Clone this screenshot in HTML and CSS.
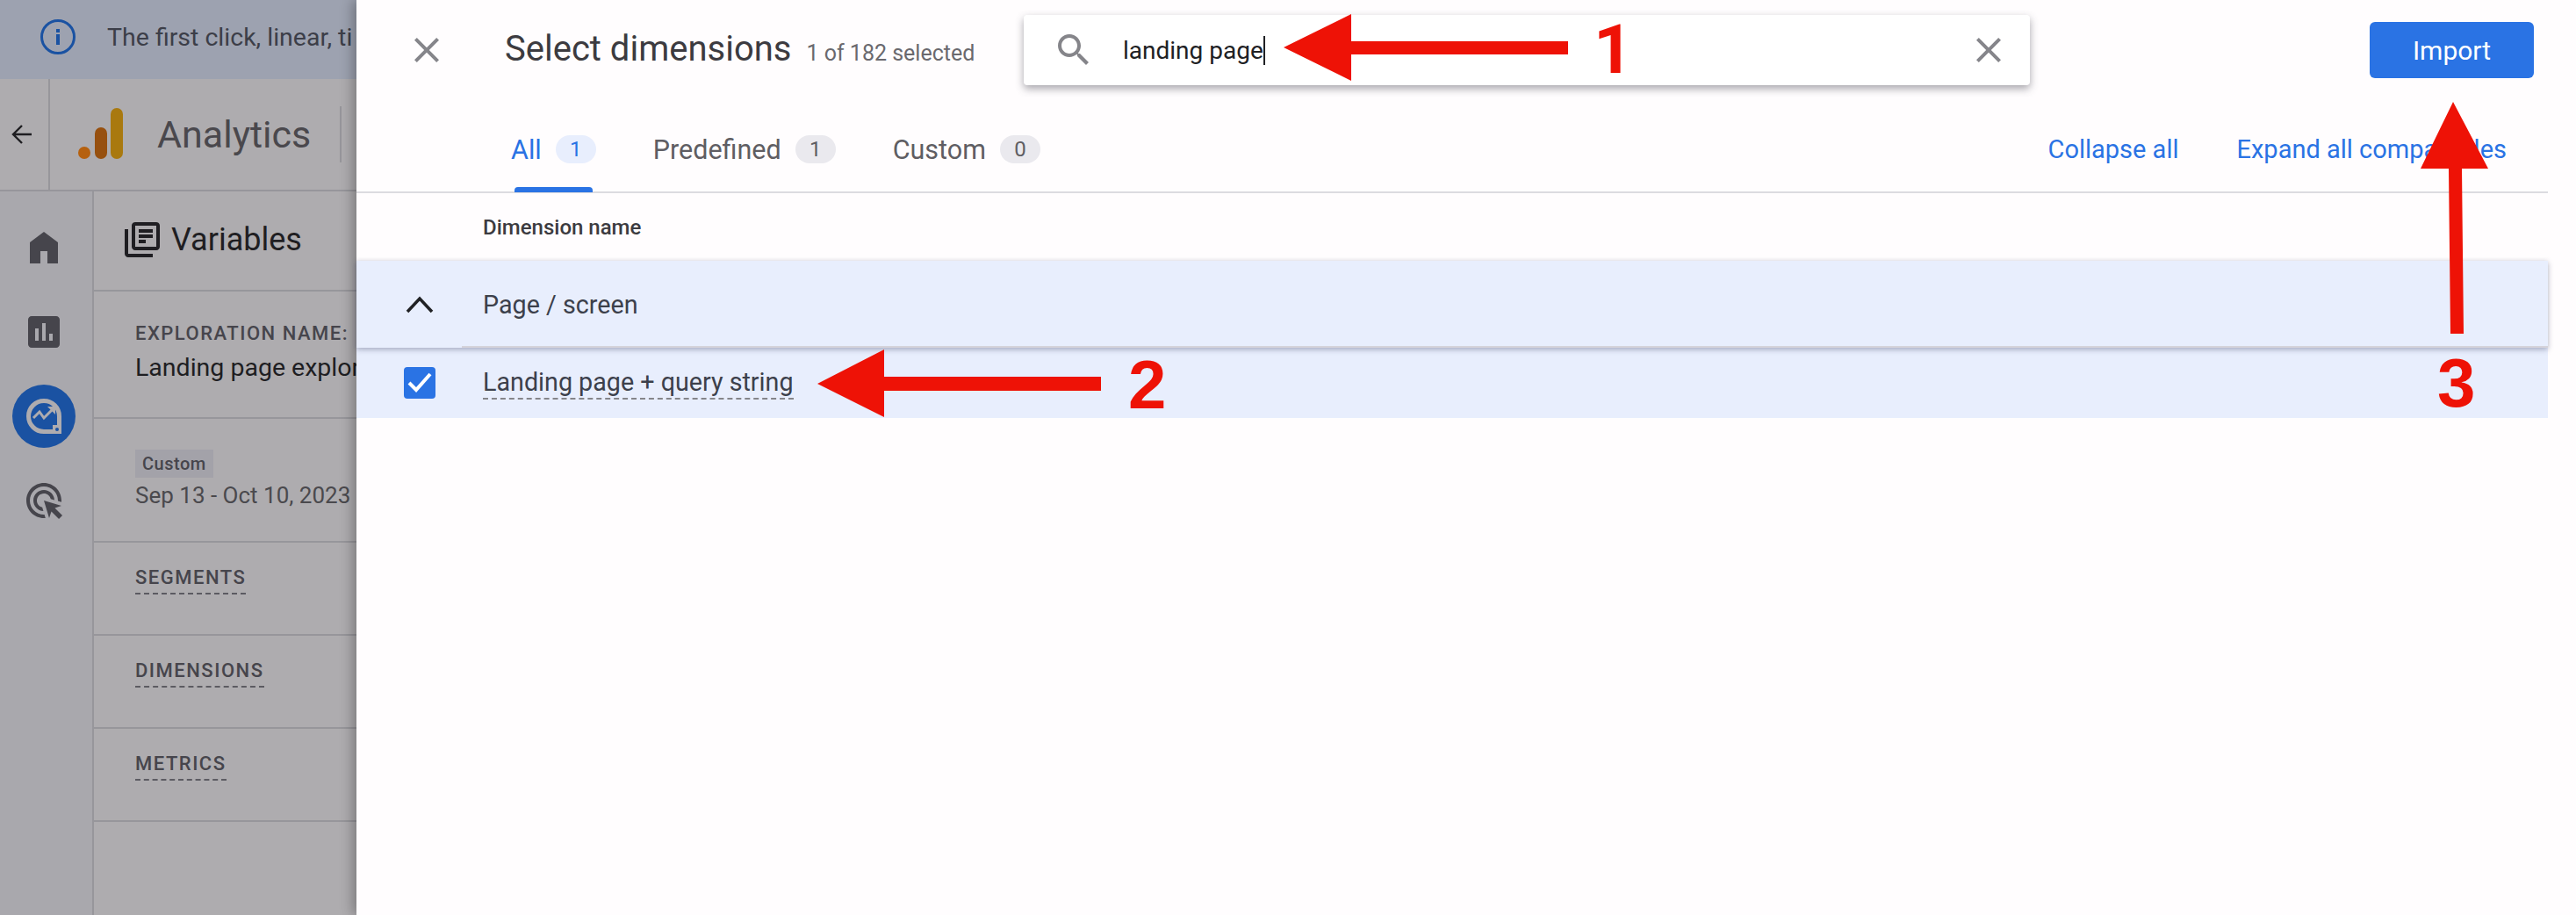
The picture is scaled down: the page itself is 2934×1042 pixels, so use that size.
FILE: index.html
```html
<!DOCTYPE html>
<html>
  <head>
    <title>Select dimensions</title>
    <link rel="stylesheet" href="styles.css">
  </head>
  <body>
    <div class="page">
      <!-- Dimmed app behind the panel -->
      <div class="backdrop">
        <div class="banner">
          <svg class="info-icon" viewBox="0 0 40 40">
            <circle cx="20" cy="20" r="18.5" fill="none" stroke="#1a52a2" stroke-width="3"/>
            <rect x="18" y="17" width="4" height="12" fill="#1a52a2"/>
            <rect x="18" y="11" width="4" height="4" fill="#1a52a2"/>
          </svg>
          <span class="banner-text">The first click, linear, ti</span>
        </div>
        <div class="app-header">
          <div class="back-cell">
            <svg class="back-icon" viewBox="0 0 24 24">
              <path d="M23 12H3M12 2L2 12l10 10" fill="none" stroke="#1f1e22" stroke-width="2.4"/>
            </svg>
          </div>
          <svg class="logo" viewBox="0 0 52 60">
            <circle cx="7" cy="51" r="7" fill="#b6610f"/>
            <rect x="19" y="22" width="14" height="36" rx="7" fill="#97500f"/>
            <rect x="37" y="0" width="14" height="58" rx="7" fill="#a9790f"/>
          </svg>
          <span class="app-name">Analytics</span>
          <span class="header-rule"></span>
        </div>
        <div class="app-body">
          <div class="sidebar">
            <div class="nav-item">
              <svg class="nav-icon" viewBox="0 0 24 24"><path d="M4 21V9l8-6 8 6v12h-6v-7h-4v7z"/></svg>
            </div>
            <div class="nav-item">
              <svg class="nav-icon" viewBox="0 0 24 24"><path d="M19 3H5c-1.1 0-2 .9-2 2v14c0 1.1.9 2 2 2h14c1.1 0 2-.9 2-2V5c0-1.1-.9-2-2-2zM9 17H7v-7h2v7zm4 0h-2V7h2v10zm4 0h-2v-4h2v4z"/></svg>
            </div>
            <div class="nav-item">
              <div class="nav-active">
                <svg class="explore-icon" viewBox="0 0 40 40">
                  <path d="M20 2.500a17.500 17.500 0 0 1 17.500 17.500V37.500H20a17.500 17.500 0 0 1 0-35z" fill="none" stroke="#aeacaf" stroke-width="5"/>
                  <path d="M30 30h8v8h-8z" fill="#aeacaf"/>
                  <circle cx="35" cy="35" r="2" fill="#1a52a2"/>
                  <path d="M8 22l7-7 5 7 9-9" fill="none" stroke="#aeacaf" stroke-width="3"/>
                  <path d="M24 9h9v9z" fill="#aeacaf"/>
                </svg>
              </div>
            </div>
            <div class="nav-item">
              <svg class="nav-icon" viewBox="0 0 24 24"><path d="M11.710 17.990C8.530 17.840 6 15.220 6 12c0-3.310 2.690-6 6-6 3.220 0 5.840 2.530 5.990 5.710l-2.100-.63C15.480 9.310 13.890 8 12 8c-2.210 0-4 1.790-4 4 0 1.890 1.310 3.480 3.080 3.890l.63 2.100zM22 12c0 .3-.01.6-.04.9l-1.970-.59c.01-.1.01-.21.01-.31 0-4.420-3.580-8-8-8s-8 3.580-8 8 3.580 8 8 8c.1 0 .21 0 .31-.01l.59 1.970c-.3.03-.6.04-.9.04-5.520 0-10-4.480-10-10S6.480 2 12 2s10 4.480 10 10zm-3.770 4.260L22 15l-10-3 3 10 1.260-3.770 4.270 4.270 1.980-1.980-4.280-4.260z"/></svg>
            </div>
          </div>
          <div class="variables">
            <div class="variables-head">
              <svg class="variables-icon" viewBox="0 0 24 24"><path d="M4 6H2v14c0 1.100.9 2 2 2h14v-2H4V6zm16-4H8c-1.100 0-2 .9-2 2v12c0 1.100.9 2 2 2h12c1.100 0 2-.9 2-2V4c0-1.100-.9-2-2-2zm0 14H8V4h12v12zM10 9h8v2h-8zm0 3h4v2h-4zm0-6h8v2h-8z"/></svg>
              <span class="variables-title">Variables</span>
            </div>
            <div class="var-section name-section">
              <div class="var-label">EXPLORATION NAME:</div>
              <div class="var-name">Landing page explor</div>
            </div>
            <div class="var-section date-section">
              <span class="date-tag">Custom</span>
              <div class="date-range">Sep 13 - Oct 10, 2023</div>
            </div>
            <div class="var-section label-section"><span class="var-label dashed">SEGMENTS</span></div>
            <div class="var-section label-section"><span class="var-label dashed">DIMENSIONS</span></div>
            <div class="var-section label-section"><span class="var-label dashed">METRICS</span></div>
          </div>
        </div>
      </div>

      <!-- Select dimensions panel -->
      <div class="panel">
        <div class="top-bar">
          <svg class="close-icon" viewBox="0 0 24 24"><path d="M19 6.410 17.590 5 12 10.590 6.410 5 5 6.410 10.590 12 5 17.590 6.410 19 12 13.410 17.590 19 19 17.590 13.410 12z"/></svg>
          <div class="title-block">
            <span class="title">Select dimensions</span>
            <span class="title-count">1 of 182 selected</span>
          </div>
          <div class="search">
            <svg class="search-icon" viewBox="0 0 24 24"><path d="M15.500 14h-.79l-.28-.27C15.410 12.590 16 11.110 16 9.500 16 5.910 13.090 3 9.500 3S3 5.910 3 9.500 5.910 16 9.500 16c1.610 0 3.090-.59 4.230-1.570l.27.28v.79l5 4.990L20.490 19l-4.990-5zm-6 0C7.010 14 5 11.990 5 9.500S7.010 5 9.500 5 14 7.010 14 9.500 11.990 14 9.500 14z"/></svg>
            <span class="search-text">landing page</span>
            <span class="caret"></span>
            <svg class="clear-icon" viewBox="0 0 24 24"><path d="M19 6.410 17.590 5 12 10.590 6.410 5 5 6.410 10.590 12 5 17.590 6.410 19 12 13.410 17.590 19 19 17.590 13.410 12z"/></svg>
          </div>
          <button class="import-button">Import</button>
        </div>

        <div class="tabs">
          <div class="tab tab-active">All <span class="pill">1</span></div>
          <div class="tab">Predefined <span class="pill">1</span></div>
          <div class="tab">Custom <span class="pill">0</span></div>
          <div class="tab-actions">
            <a class="link">Collapse all</a>
            <a class="link">Expand all comparables</a>
          </div>
        </div>

        <div class="table-head">Dimension name</div>

        <div class="group-row">
          <svg class="chevron" viewBox="0 0 32 20"><path d="M2 18L16 3l14 15" fill="none" stroke="#202124" stroke-width="3.500"/></svg>
          <span class="group-name">Page / screen</span>
        </div>
        <div class="item-row">
          <svg class="checkbox" viewBox="0 0 36 36">
            <rect width="36" height="36" rx="4" fill="#2a73e4"/>
            <path d="M6 18l8 8L30 8" fill="none" stroke="#fff" stroke-width="4"/>
          </svg>
          <span class="item-name">Landing page + query string</span>
        </div>
      </div>

      <!-- Red callouts drawn on top of the screenshot -->
      <svg class="callouts" viewBox="0 0 2934 1042">
        <path class="callout" d="M1462 54L1539 16V47H1786V62H1539V92z"/>
        <text class="callout-num num-one" x="1815" y="83">1</text>
        <path class="callout" d="M931 437L1007 398V429H1254V445H1007V475z"/>
        <text class="callout-num" x="1285" y="465">2</text>
        <path class="callout" d="M2794 116L2834 192H2804L2806 380H2791L2789 192H2757z"/>
        <text class="callout-num" x="2776" y="463">3</text>
      </svg>
    </div>
  </body>
</html>
```

FILE: styles.css
```css
body {
  margin: 0;
  font-family: Roboto, "Liberation Sans", sans-serif;
  color: #3c4043;
}
.page {
  position: relative;
  display: flex;
  width: 2934px;
  height: 1042px;
  overflow: hidden;
  background: #fffdfe;
}

/* Backdrop */
.backdrop {
  width: 406px;
  flex-shrink: 0;
  display: flex;
  flex-direction: column;
  overflow: hidden;
  background: #aeacaf;
}
.banner {
  height: 90px;
  flex-shrink: 0;
  display: flex;
  align-items: center;
  gap: 36px;
  padding-left: 46px;
  background: #9da2b0;
  white-space: nowrap;
}
.info-icon {
  width: 40px;
  height: 40px;
  flex-shrink: 0;
  margin-top: -6px;
}
.banner-text {
  font-size: 28.5px;
  color: #3c3e48;
  margin-top: -6px;
}
.app-header {
  height: 126px;
  flex-shrink: 0;
  display: flex;
  align-items: center;
  border-bottom: 2px solid #97969b;
}
.back-cell {
  width: 57px;
  height: 100%;
  flex-shrink: 0;
  display: flex;
  align-items: center;
  padding-left: 13px;
  box-sizing: border-box;
  border-right: 2px solid #97969b;
}
.back-icon {
  width: 24px;
  height: 24px;
}
.logo {
  width: 52px;
  height: 60px;
  margin-left: 32px;
  flex-shrink: 0;
}
.app-name {
  font-size: 43px;
  color: #4a484d;
  margin-left: 38px;
}
.header-rule {
  width: 2px;
  height: 64px;
  margin-left: 33px;
  flex-shrink: 0;
  background: #97969b;
}
.app-body {
  flex: 1;
  display: flex;
  min-height: 0;
}
.sidebar {
  width: 100px;
  flex-shrink: 0;
  padding: 16px 5px 0 0;
  background: #a9a8ad;
  border-right: 2px solid #97969b;
}
.nav-item {
  height: 96px;
  display: flex;
  align-items: center;
  justify-content: center;
}
.nav-icon {
  width: 48px;
  height: 48px;
  fill: #46454c;
}
.nav-active {
  width: 72px;
  height: 72px;
  border-radius: 50%;
  background: #1a52a2;
  display: flex;
  align-items: center;
  justify-content: center;
}
.explore-icon {
  width: 40px;
  height: 40px;
}
.variables {
  flex: 1;
  min-width: 0;
  white-space: nowrap;
}
.variables-head {
  height: 114px;
  display: flex;
  align-items: center;
  padding: 0 0 2px 31px;
  box-sizing: border-box;
  border-bottom: 2px solid #97969b;
}
.variables-icon {
  width: 48px;
  height: 48px;
  fill: #1f1e22;
  flex-shrink: 0;
}
.variables-title {
  font-size: 36px;
  color: #1f1e22;
  margin-left: 9px;
}
.var-section {
  padding-left: 47px;
  box-sizing: border-box;
  border-bottom: 2px solid #97969b;
}
.name-section {
  height: 145px;
  padding-top: 33px;
}
.date-section {
  height: 141px;
  padding-top: 35px;
}
.label-section {
  height: 106px;
  padding-top: 25px;
}
.var-label {
  font-size: 22px;
  font-weight: 500;
  letter-spacing: 1.500px;
  line-height: 30px;
  color: #46454c;
}
.dashed {
  display: inline-block;
  padding-bottom: 2px;
  border-bottom: 2px dashed #5c5b62;
}
.var-name {
  font-size: 28.5px;
  line-height: 40px;
  margin-top: 4px;
  color: #1e1e22;
}
.date-tag {
  display: inline-block;
  padding: 0 8px;
  font-size: 20px;
  font-weight: 500;
  line-height: 32px;
  letter-spacing: .5px;
  color: #46454c;
  background: #a3a2a9;
}
.date-range {
  font-size: 26px;
  line-height: 36px;
  margin-top: 2px;
  color: #4a494d;
}

/* Panel */
.panel {
  position: relative;
  flex: 1;
  min-width: 0;
  padding-right: 32px;
  background: #fffdfe;
  box-shadow: -4px 0 14px rgba(0, 0, 0, .3);
}
.top-bar {
  height: 114px;
  display: flex;
  align-items: center;
  margin-right: -32px;
}
.close-icon {
  width: 48px;
  height: 48px;
  margin-left: 56px;
  flex-shrink: 0;
  fill: #85858a;
}
.title-block {
  width: 591px;
  margin-left: 65px;
  flex-shrink: 0;
  display: flex;
  align-items: baseline;
  gap: 17px;
  margin-top: -3px;
  white-space: nowrap;
}
.title {
  font-size: 40px;
  color: #3c3b40;
}
.title-count {
  font-size: 25px;
  color: #6a696e;
}
.search {
  width: 1146px;
  height: 80px;
  flex-shrink: 0;
  display: flex;
  align-items: center;
  border-radius: 4px;
  background: #fff;
  box-shadow: 0 4px 10px rgba(60, 60, 70, .45);
}
.search-icon {
  width: 48px;
  height: 48px;
  margin-left: 33px;
  flex-shrink: 0;
  fill: #85858a;
}
.search-text {
  font-size: 28px;
  margin-left: 32px;
  color: #202124;
}
.caret {
  width: 2px;
  height: 33px;
  background: #202124;
}
.clear-icon {
  width: 48px;
  height: 48px;
  margin-left: auto;
  margin-right: 23px;
  flex-shrink: 0;
  fill: #85858a;
}
.import-button {
  width: 187px;
  height: 64px;
  margin-left: auto;
  margin-right: 48px;
  border: none;
  border-radius: 6px;
  background: #2a73e4;
  color: #fff;
  font-family: inherit;
  font-size: 30px;
}
.tabs {
  height: 106px;
  box-sizing: border-box;
  padding: 8px 47px 0 176px;
  display: flex;
  align-items: center;
  gap: 65px;
  font-size: 30.5px;
  color: #5f5e63;
  border-bottom: 2px solid #dcdbe0;
}
.tab {
  position: relative;
  display: flex;
  align-items: center;
  gap: 16px;
}
.pill {
  width: 46px;
  height: 32px;
  border-radius: 16px;
  background: #eae9ee;
  font-size: 24px;
  line-height: 32px;
  text-align: center;
}
.tab-active {
  color: #2a73e4;
}
.tab-active .pill {
  background: #e8eefd;
}
.tab-active::after {
  content: "";
  position: absolute;
  left: 4px;
  right: 4px;
  top: 60px;
  height: 6px;
  border-radius: 4px 4px 0 0;
  background: #2a73e4;
}
.tab-actions {
  margin-left: auto;
  display: flex;
  gap: 66px;
  font-size: 29px;
}
.link {
  color: #2a73e4;
}
.table-head {
  height: 77px;
  box-sizing: border-box;
  padding: 1px 0 0 144px;
  display: flex;
  align-items: center;
  font-size: 24px;
  font-weight: 500;
  color: #3c3b40;
}
.group-row {
  position: relative;
  z-index: 1;
  height: 99px;
  display: flex;
  align-items: center;
  background: #e8eefd;
  box-shadow: 0 2px 6px rgba(60, 64, 100, .4), 0 -2px 4px rgba(60, 64, 100, .03);
}
.group-row::after {
  content: "";
  position: absolute;
  left: 120px;
  right: 0;
  bottom: 0;
  height: 2px;
  background: #d5d3da;
}
.chevron {
  width: 32px;
  height: 20px;
  margin-left: 56px;
  flex-shrink: 0;
}
.group-name {
  font-size: 28.7px;
  margin-left: 56px;
  color: #3c404b;
}
.item-row {
  height: 80px;
  display: flex;
  align-items: center;
  background: #e8eefd;
}
.checkbox {
  width: 36px;
  height: 36px;
  margin-left: 54px;
  flex-shrink: 0;
}
.item-name {
  font-size: 28.7px;
  line-height: 34px;
  padding-bottom: 1px;
  margin: 1px 0 0 54px;
  color: #3c404b;
  border-bottom: 2px dashed #85858a;
}

/* Callouts */
.callouts {
  position: absolute;
  z-index: 2;
  left: 0;
  top: 0;
  width: 2934px;
  height: 1042px;
}
.callout {
  fill: #ee1206;
}
.callout-num {
  font-family: "Liberation Sans", sans-serif;
  font-size: 78px;
  font-weight: 700;
  fill: #ee1206;
}
.num-one {
  font-family: Roboto, sans-serif;
}
```
